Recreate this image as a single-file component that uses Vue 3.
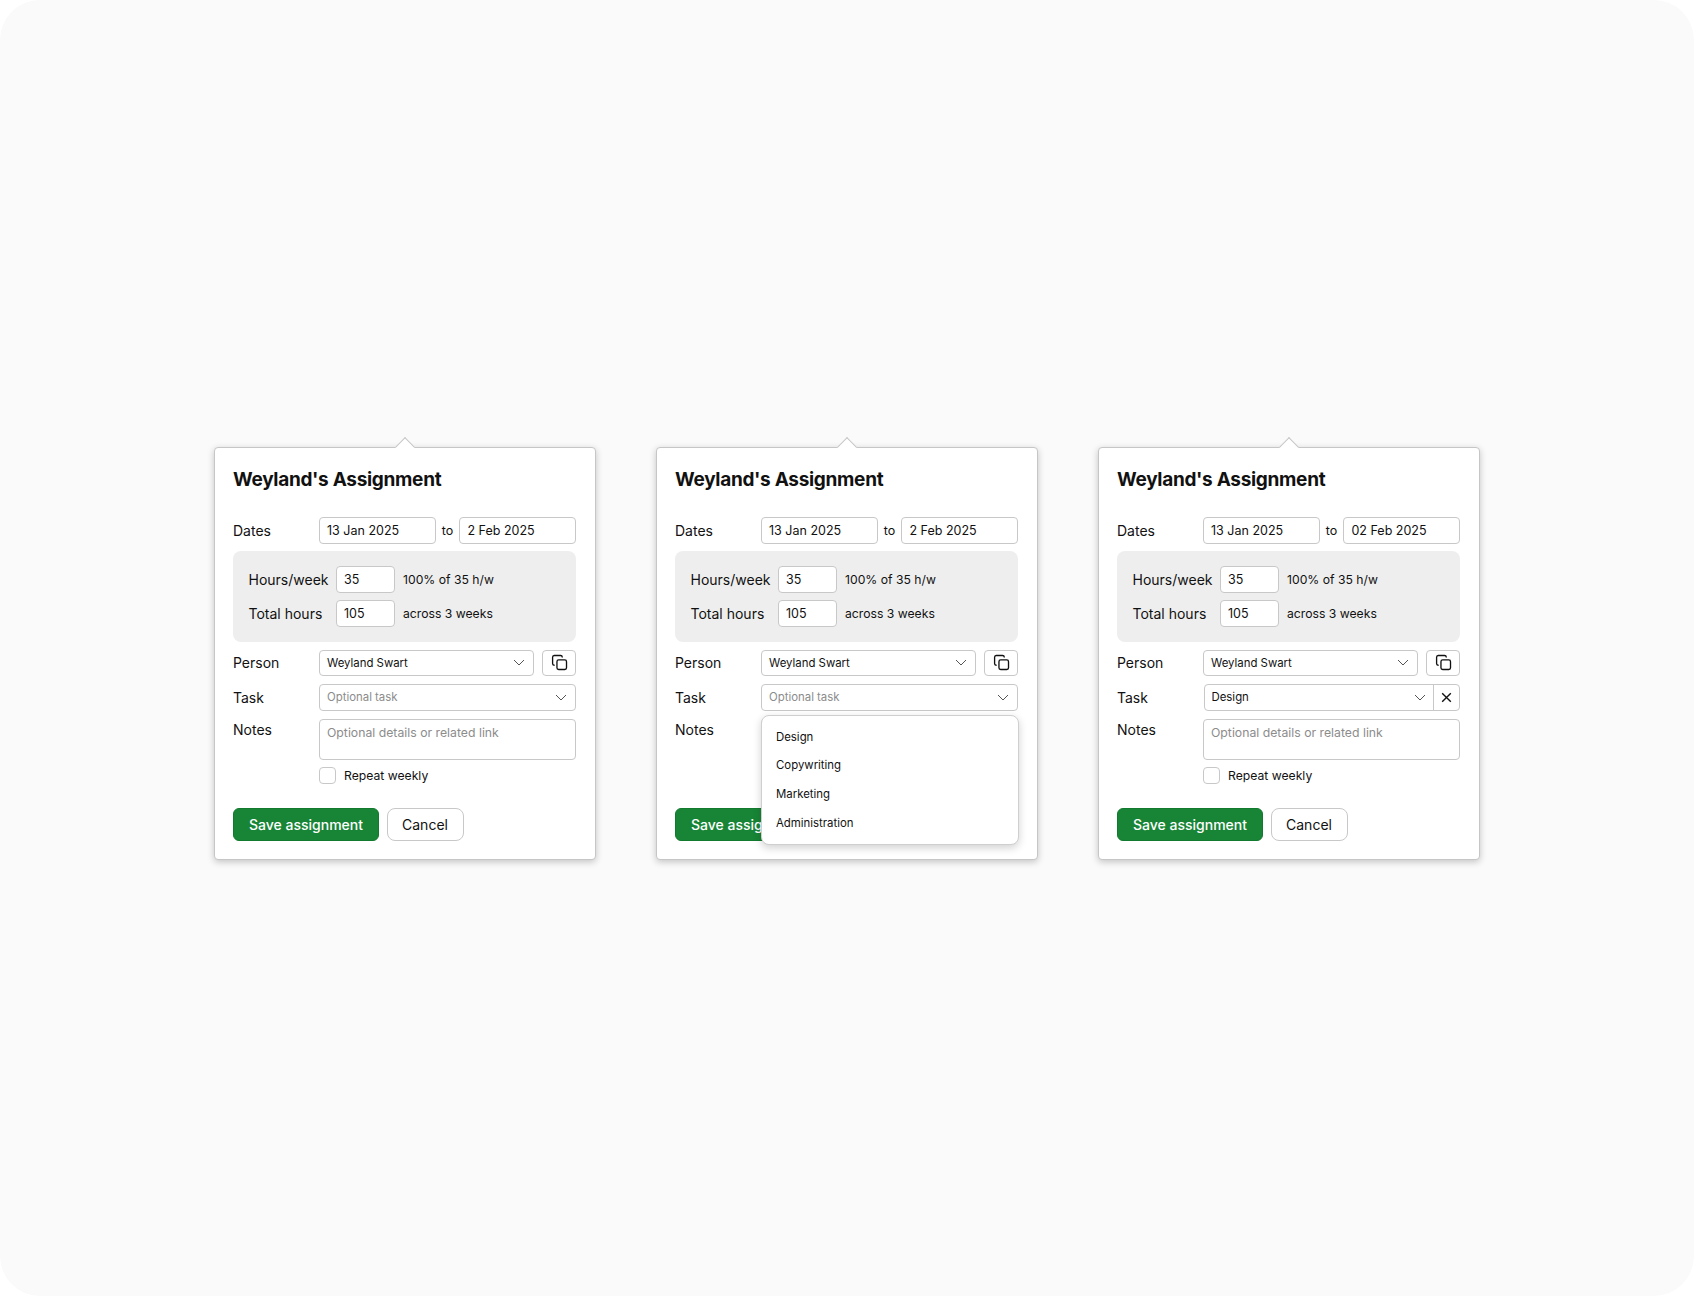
<script setup>
const cards = [
  { endDate: "2 Feb 2025", task: "", open: false },
  { endDate: "2 Feb 2025", task: "", open: true },
  { endDate: "02 Feb 2025", task: "Design", open: false },
];
const taskOptions = ["Design", "Copywriting", "Marketing", "Administration"];
</script>

<template>
  <div class="page">
    <div class="cards">
      <section v-for="(card, i) in cards" :key="i" class="card">
        <span class="arrow"></span>
        <h2>Weyland's Assignment</h2>

        <div class="row dates">
          <label>Dates</label>
          <div class="field date">13 Jan 2025</div>
          <span class="to">to</span>
          <div class="field date">{{ card.endDate }}</div>
        </div>

        <div class="hours">
          <div class="hours-row">
            <label>Hours/week</label>
            <div class="field num">35</div>
            <span class="hint">100% of 35 h/w</span>
          </div>
          <div class="hours-row">
            <label>Total hours</label>
            <div class="field num">105</div>
            <span class="hint">across 3 weeks</span>
          </div>
        </div>

        <div class="row">
          <label>Person</label>
          <div class="field select">
            <span>Weyland Swart</span>
            <svg class="chev" width="12" height="7" viewBox="0 0 12 7"><path d="M1 1l5 5 5-5" /></svg>
          </div>
          <button class="copy">
            <svg width="17" height="17" viewBox="0 0 16 16" fill="none" stroke="#111" stroke-width="1.25">
              <rect x="5.6" y="5.6" width="9" height="9" rx="1.6" />
              <path d="M3.4 10.6h-.4a1.6 1.6 0 0 1-1.5-1.6V3a1.6 1.6 0 0 1 1.5-1.6h6a1.6 1.6 0 0 1 1.6 1.5v.4" />
            </svg>
          </button>
        </div>

        <div class="row">
          <label>Task</label>
          <div v-if="card.task" class="task-group">
            <div class="task-value">
              <span>{{ card.task }}</span>
              <svg class="chev" width="12" height="7" viewBox="0 0 12 7"><path d="M1 1l5 5 5-5" /></svg>
            </div>
            <div class="clear">
              <svg width="11" height="11" viewBox="0 0 11 11"><path d="M1.2 1.2l8.6 8.6M9.8 1.2l-8.6 8.6" /></svg>
            </div>
          </div>
          <div v-else class="field select grow">
            <span class="placeholder">Optional task</span>
            <svg class="chev" width="12" height="7" viewBox="0 0 12 7"><path d="M1 1l5 5 5-5" /></svg>
          </div>
        </div>

        <div class="row notes-row">
          <label>Notes</label>
          <div class="field notes"><span class="placeholder">Optional details or related link</span></div>
        </div>

        <div class="repeat">
          <span class="checkbox"></span>
          <span>Repeat weekly</span>
        </div>

        <div class="actions">
          <button class="save">Save assignment</button>
          <button class="cancel">Cancel</button>
        </div>

        <ul v-if="card.open" class="menu">
          <li v-for="opt in taskOptions" :key="opt">{{ opt }}</li>
        </ul>
      </section>
    </div>
  </div>
</template>

<style>
html,
body {
  margin: 0;
  background: #fff;
}
</style>

<style scoped>
.page {
  width: 1694px;
  height: 1296px;
  box-sizing: border-box;
  padding-top: 447px;
  background: #fafafa;
  border-radius: 40px;
  font-family: Inter, "Liberation Sans", sans-serif;
  color: #111;
}

.cards {
  display: flex;
  justify-content: center;
  gap: 60px;
}

.card {
  position: relative;
  box-sizing: border-box;
  width: 382px;
  height: 413px;
  padding: 0 19px 0 18px;
  background: #fff;
  border: 1px solid #c6c6c6;
  border-radius: 4px;
  box-shadow: 0 2px 7px rgba(0, 0, 0, 0.22);
}

.arrow {
  position: absolute;
  left: 50%;
  top: -8px;
  width: 14px;
  height: 14px;
  margin-left: -7.5px;
  background: #fff;
  border-top: 1px solid #c6c6c6;
  border-left: 1px solid #c6c6c6;
  box-sizing: border-box;
  transform: rotate(45deg);
}

h2 {
  margin: 20px 0 0;
  font-size: 19px;
  line-height: 24px;
  font-weight: 700;
  letter-spacing: -0.3px;
}

label {
  font-size: 14px;
}

.row {
  display: flex;
  align-items: center;
  margin-top: 8px;
}

.row > label {
  width: 86px;
  flex: none;
}

.dates {
  margin-top: 25px;
}

.field {
  box-sizing: border-box;
  height: 26.5px;
  display: flex;
  align-items: center;
  padding: 0 7px;
  background: #fff;
  border: 1.5px solid #c8c8c8;
  border-radius: 4px;
  font-size: 12.5px;
}

.date {
  width: 117px;
}

.to {
  width: 24px;
  text-align: center;
  font-size: 12.5px;
}

.hours {
  margin-top: 7.5px;
  padding: 15px 15px 15px 15.5px;
  background: #eeeeee;
  border-radius: 8px;
  display: flex;
  flex-direction: column;
  gap: 7.5px;
}

.hours-row {
  display: flex;
  align-items: center;
}

.hours-row label {
  width: 87.5px;
  flex: none;
}

.num {
  width: 59px;
}

.hint {
  margin-left: 8px;
  font-size: 12.2px;
}

.select {
  width: 215px;
  justify-content: space-between;
  padding-right: 8px;
  font-size: 11.4px;
}

.grow {
  width: 258px;
}

.chev {
  fill: none;
  stroke: #555;
  stroke-width: 1;
}

.placeholder {
  color: #8c8c8c;
}

.copy {
  box-sizing: border-box;
  width: 34px;
  height: 26.5px;
  margin-left: 8px;
  padding: 0;
  display: flex;
  align-items: center;
  justify-content: center;
  background: #fff;
  border: 1.5px solid #c8c8c8;
  border-radius: 4px;
}

.task-group {
  box-sizing: border-box;
  width: 257px;
  height: 26.5px;
  margin-left: 1px;
  display: flex;
  border: 1.5px solid #c8c8c8;
  border-radius: 4px;
  font-size: 11.4px;
}

.task-value {
  flex: 1;
  display: flex;
  align-items: center;
  justify-content: space-between;
  padding: 0 7px 0 6.5px;
}

.clear {
  width: 25px;
  display: flex;
  align-items: center;
  justify-content: center;
  border-left: 1px solid #c8c8c8;
}

.clear path {
  fill: none;
  stroke: #111;
  stroke-width: 1.4;
}

.notes-row {
  align-items: flex-start;
}

.notes-row label {
  line-height: 21px;
}

.notes {
  width: 258px;
  height: 41.5px;
  align-items: flex-start;
  padding-top: 5px;
  font-size: 12.25px;
}

.repeat {
  display: flex;
  align-items: center;
  gap: 8px;
  margin: 7px 0 0 86px;
  font-size: 12.2px;
}

.checkbox {
  box-sizing: border-box;
  width: 17px;
  height: 17px;
  border: 1.5px solid #c8c8c8;
  border-radius: 4px;
  background: #fff;
}

.actions {
  display: flex;
  gap: 7.5px;
  margin-top: 24px;
}

.actions button {
  box-sizing: border-box;
  height: 33px;
  font-family: inherit;
  font-size: 14px;
  border-radius: 6px;
}

.save {
  width: 146px;
  padding: 0;
  color: #fff;
  font-weight: 500;
  background: #178535;
  border: 1px solid #127a2e;
}

.cancel {
  width: 77px;
  padding: 0;
  color: #111;
  background: #fff;
  border: 1.5px solid #c8c8c8;
  border-radius: 8px !important;
}

.menu {
  position: absolute;
  left: 104px;
  top: 266.5px;
  box-sizing: border-box;
  width: 258px;
  height: 130px;
  margin: 0;
  padding: 7px 0;
  list-style: none;
  background: #fff;
  border: 1.5px solid #cfcfcf;
  border-radius: 8px;
  box-shadow: 0 3px 8px rgba(0, 0, 0, 0.18);
  font-size: 11.4px;
}

.menu li {
  height: 28.7px;
  line-height: 28.7px;
  padding-left: 14px;
}
</style>
